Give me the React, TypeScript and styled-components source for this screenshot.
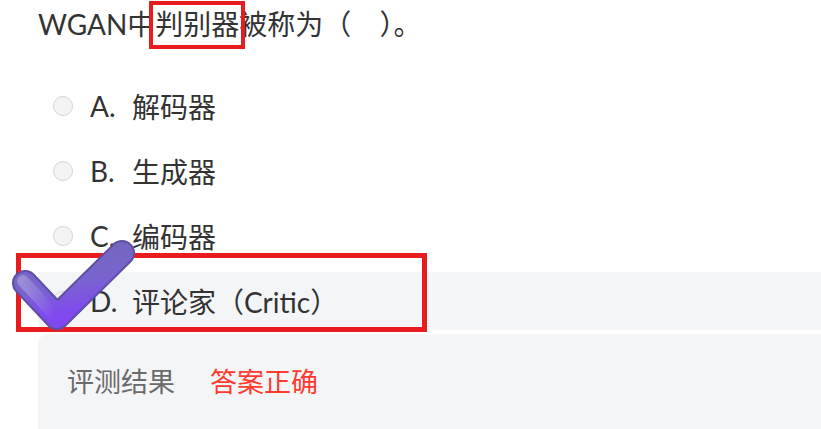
import React from "react"
import styled, { createGlobalStyle } from "styled-components"

const GlobalStyle = createGlobalStyle`
  html, body {
    margin: 0;
    padding: 0;
    background: #ffffff;
    overflow: hidden;
  }
  body {
    font-family: "Lato", "Noto Sans CJK SC", sans-serif;
    color: #333333;
  }
`

const options = [
  { key: "A", text: "解码器" },
  { key: "B", text: "生成器" },
  { key: "C", text: "编码器" },
  { key: "D", text: "评论家（Critic）", correct: true },
]

const Page = styled.div`
  width: 821px;
  height: 429px;
  padding-left: 38px;
  box-sizing: border-box;
  overflow: hidden;
`

const Question = styled.div`
  font-size: 28px;
  line-height: 48px;
  height: 48px;
  margin-bottom: 29px;
  white-space: nowrap;
`

const Marked = styled.span`
  position: relative;
  display: inline-block;

  &::after {
    content: "";
    position: absolute;
    left: -6px;
    right: -6px;
    top: 1px;
    bottom: -1px;
    border: 4px solid #e81c1f;
  }
`

const OptionList = styled.div`
  display: flex;
  flex-direction: column;
  gap: 7px;
`

const OptionRow = styled.div<{ $active?: boolean }>`
  position: relative;
  display: flex;
  align-items: center;
  height: 58px;
  padding-left: 15px;
  background: ${p => (p.$active ? "#f4f5f7" : "transparent")};
  font-size: 28px;
`

const Radio = styled.span`
  width: 18px;
  height: 18px;
  border-radius: 50%;
  border: 1.5px solid #d6d6d6;
  background: #f4f4f4;
  margin-right: 17px;
  flex-shrink: 0;
`

const Letter = styled.span`
  width: 42px;
  flex-shrink: 0;
`

const OptionText = styled.span`
  white-space: nowrap;
`

const RedBox = styled.div`
  position: absolute;
  left: -22px;
  top: -19px;
  width: 411px;
  height: 79px;
  box-sizing: border-box;
  border: 5px solid #e81c1f;
  pointer-events: none;
`

const Tick = styled.svg`
  position: absolute;
  left: -38px;
  top: -37px;
  width: 140px;
  height: 100px;
  overflow: visible;
`

const Result = styled.div`
  display: flex;
  align-items: flex-start;
  gap: 35px;
  margin-top: 4px;
  height: 140px;
  padding: 30px 0 0 29px;
  box-sizing: border-box;
  background: #f4f5f7;
  border-top-left-radius: 10px;
  font-size: 27px;
  line-height: 36px;
`

const ResultLabel = styled.span`
  color: #6b6b6b;
`

const ResultValue = styled.span`
  color: #ff3b30;
`

const CheckMark = () => (
  <Tick viewBox="0 0 140 100">
    <defs>
      <linearGradient id="tickGrad" x1="0" y1="0" x2="0.3" y2="1">
        <stop offset="0" stopColor="#7467b8" />
        <stop offset="0.55" stopColor="#7a64cf" />
        <stop offset="1" stopColor="#8048f0" />
      </linearGradient>
      <linearGradient id="tickShine" x1="0" y1="0" x2="1" y2="0">
        <stop offset="0" stopColor="#ffffff" stopOpacity="0.25" />
        <stop offset="1" stopColor="#ffffff" stopOpacity="0" />
      </linearGradient>
    </defs>
    <polyline
      points="25,48 57,82 122,18"
      fill="none"
      stroke="#5e4fa6"
      strokeWidth="26"
      strokeLinecap="round"
      strokeLinejoin="round"
    />
    <polyline
      points="25,48 57,82 122,18"
      fill="none"
      stroke="url(#tickGrad)"
      strokeWidth="22"
      strokeLinecap="round"
      strokeLinejoin="round"
    />
    <polyline
      points="23,46 54,79"
      fill="none"
      stroke="url(#tickShine)"
      strokeWidth="12"
      strokeLinecap="round"
    />
  </Tick>
)

export default function App() {
  return (
    <>
      <GlobalStyle />
      <Page>
        <Question>
          WGAN中<Marked>判别器</Marked>被称为（{"\u3000"}）。
        </Question>
        <OptionList>
          {options.map(opt => (
            <OptionRow key={opt.key} $active={opt.correct}>
              <Radio />
              <Letter>{opt.key}.</Letter>
              <OptionText>{opt.text}</OptionText>
              {opt.correct && (
                <>
                  <RedBox />
                  <CheckMark />
                </>
              )}
            </OptionRow>
          ))}
        </OptionList>
        <Result>
          <ResultLabel>评测结果</ResultLabel>
          <ResultValue>答案正确</ResultValue>
        </Result>
      </Page>
    </>
  )
}
